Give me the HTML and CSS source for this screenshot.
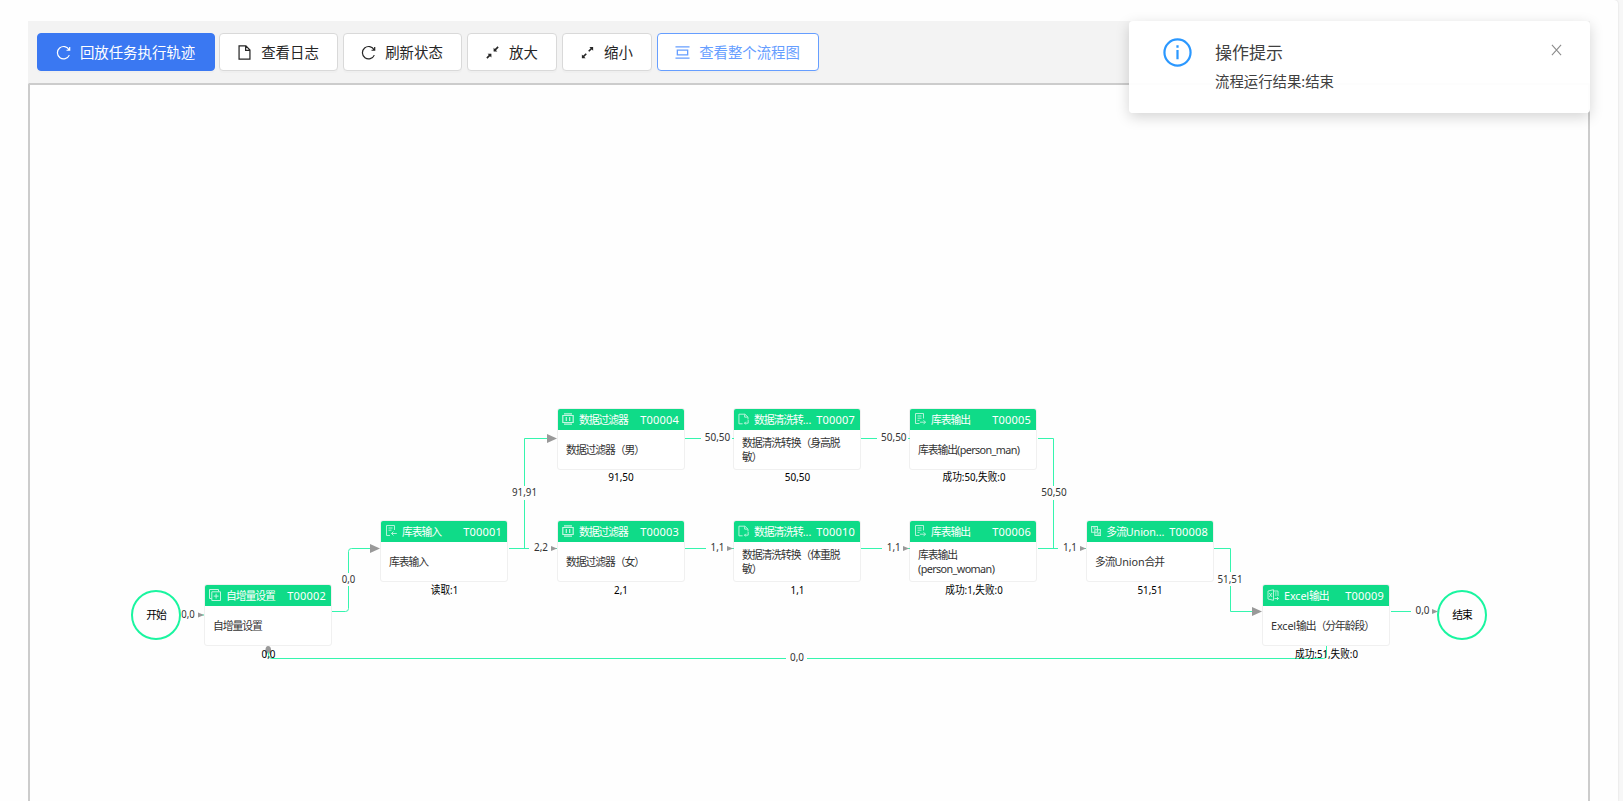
FILE: index.html
```html
<!DOCTYPE html>
<html lang="zh-CN">
<head>
    <meta charset="utf-8">
    <title>流程监控</title>
    <link rel="stylesheet" href="styles.css">
</head>
<body>
    <svg class="sprite">
        <symbol id="reload" viewBox="0 0 16 16"><path d="M14 5.2A6.6 6.6 0 1 0 14.2 10.800M14.600 2.200V5.600H11.200" fill="none" stroke="currentColor" stroke-width="1.300"/></symbol>
        <symbol id="file" viewBox="0 0 16 16"><path d="M2.200 1H9.500L13.800 5.300V15H2.200ZM9.200 1V5.700H13.800" fill="none" stroke="currentColor" stroke-width="1.300"/></symbol>
        <symbol id="shrink" viewBox="0 0 16 16"><path d="M2 14L6 10M14 2L10 6" stroke="currentColor" stroke-width="1.700"/><path d="M2.800 9.200H6.800V13.200ZM9.200 2.800V6.800H13.200Z" fill="currentColor"/></symbol>
        <symbol id="arrows" viewBox="0 0 16 16"><path d="M3 13L6.700 9.300M13 3L9.300 6.700" stroke="currentColor" stroke-width="1.700"/><path d="M2 10V14H6ZM10 2H14V6Z" fill="currentColor"/></symbol>
        <symbol id="flow" viewBox="0 0 16 16"><path d="M.5 2H15.500M.5 14H15.500M2.500 5.500H13.500V10.500H2.500Z" fill="none" stroke="currentColor" stroke-width="1.400"/></symbol>
        <symbol id="add" viewBox="0 0 12 12"><path d="M2.500 9.500H.5V.5H9.500V2.500M2.800 2.800H11.500V11.500H2.800ZM7.100 4.700V9.600M4.700 7.100H9.600" fill="none" stroke="currentColor"/></symbol>
        <symbol id="input" viewBox="0 0 12 12"><path d="M9.500 5V.5H1.500V10.500H5M3.500 3H7.500M3.500 5.200H6.500M11.800 8.500H6.500M8.500 6.500L6.500 8.500L8.500 10.500" fill="none" stroke="currentColor" stroke-width=".9"/></symbol>
        <symbol id="output" viewBox="0 0 12 12"><path d="M9.500 5.500V.5H1.500V10.500H5.500M3.500 3H7.500M3.500 5.200H7.500M3.500 7.400H5.500M6 9.200H11.500M9.500 7.200L11.500 9.200L9.500 11.200" fill="none" stroke="currentColor" stroke-width=".9"/></symbol>
        <symbol id="filter" viewBox="0 0 12 12"><path d="M2 .8H10M2 11.200H10M.8 2.500H11.200V9.500H.8ZM4.300 4V8M7.700 4V8" fill="none" stroke="currentColor" stroke-width="1.200"/></symbol>
        <symbol id="clean" viewBox="0 0 12 12"><path d="M5 11.200H1V.8H7.500L10.800 4V6.500M7.200 1V4H10.500M11 7V10.500H7M8.500 9L7 10.500L8.500 12" fill="none" stroke="currentColor"/></symbol>
        <symbol id="union" viewBox="0 0 12 12"><path d="M.7.7H7.500V7.500H.7ZM4.500 4.500H11.300V11.300H4.500ZM2.500 2.500H5.500M9.500 7V9.500H6.500" fill="none" stroke="currentColor" stroke-width="1.200"/></symbol>
        <symbol id="excel" viewBox="0 0 12 12"><path d="M1 2L6.500.7V11.300L1 10ZM6.500 2H11V7M2.300 4L5 8M5 4L2.300 8M8 4H9.500M8 6H9.500M7.500 9.500H11.500M10 8L11.500 9.500L10 11" fill="none" stroke="currentColor" stroke-width=".9"/></symbol>
    </svg>

    <div class="page">
        <div class="toolbar">
            <button class="btn primary"><svg><use href="#reload"/></svg>回放任务执行轨迹</button>
            <button class="btn"><svg><use href="#file"/></svg>查看日志</button>
            <button class="btn"><svg><use href="#reload"/></svg>刷新状态</button>
            <button class="btn"><svg><use href="#shrink"/></svg>放大</button>
            <button class="btn"><svg><use href="#arrows"/></svg>缩小</button>
            <button class="btn ghost"><svg><use href="#flow"/></svg>查看整个流程图</button>
        </div>

        <div class="canvas">
            <div class="circle start">开始</div>
            <div class="circle end">结束</div>

            <div class="node n2"><div class="head"><svg><use href="#add"/></svg><span class="name">自增量设置</span><span class="id">T00002</span></div><div class="body">自增量设置</div></div>
            <div class="node n1"><div class="head"><svg><use href="#input"/></svg><span class="name">库表输入</span><span class="id">T00001</span></div><div class="body">库表输入</div></div>
            <div class="node n4"><div class="head"><svg><use href="#filter"/></svg><span class="name">数据过滤器</span><span class="id">T00004</span></div><div class="body">数据过滤器（男）</div></div>
            <div class="node n3"><div class="head"><svg><use href="#filter"/></svg><span class="name">数据过滤器</span><span class="id">T00003</span></div><div class="body">数据过滤器（女）</div></div>
            <div class="node n7"><div class="head"><svg><use href="#clean"/></svg><span class="name">数据清洗转<span class="latin">...</span></span><span class="id">T00007</span></div><div class="body">数据清洗转换（身高脱<br>敏）</div></div>
            <div class="node n10"><div class="head"><svg><use href="#clean"/></svg><span class="name">数据清洗转<span class="latin">...</span></span><span class="id">T00010</span></div><div class="body">数据清洗转换（体重脱<br>敏）</div></div>
            <div class="node n5"><div class="head"><svg><use href="#output"/></svg><span class="name">库表输出</span><span class="id">T00005</span></div><div class="body"><span>库表输出<span class="latin tight">(person_man)</span></span></div></div>
            <div class="node n6"><div class="head"><svg><use href="#output"/></svg><span class="name">库表输出</span><span class="id">T00006</span></div><div class="body"><span>库表输出<br><span class="latin tight">(person_woman)</span></span></div></div>
            <div class="node n8"><div class="head"><svg><use href="#union"/></svg><span class="name">多流<span class="latin">Union...</span></span><span class="id">T00008</span></div><div class="body"><span>多流<span class="latin">Union</span>合并</span></div></div>
            <div class="node n9"><div class="head"><svg><use href="#excel"/></svg><span class="name"><span class="latin">Excel</span>输出</span><span class="id">T00009</span></div><div class="body"><span><span class="latin">Excel</span>输出（分年龄段）</span></div></div>

            <svg class="edges" viewBox="30 85 1558 716">
                <g class="lines">
                    <path d="M198 615H204M332 611.500H345.500Q348.500 611.500 348.500 608.500V586M348.500 573V551.500Q348.500 548.500 351.500 548.500H372"/>
                    <path d="M509 548.500H529M524.500 548.500V500M524.500 486V438.500H548"/>
                    <path d="M553 548.500H557M685 438.500H701M685 548.500H706M732 438.500H734M729 548.500H734"/>
                    <path d="M861 438.500H877M861 548.500H882M908 438.500H910M905 548.500H910"/>
                    <path d="M1038 438.500H1053.500V486M1053.500 500V548.500M1038 548.500H1058M1081 548.500H1086"/>
                    <path d="M1214 548.500H1230.500V572M1230.500 586V611.500H1254M1391 611.500H1411"/>
                    <path d="M1326.500 646V655.500Q1326.500 658.500 1323.500 658.500H807M786 658.500H272Q268.500 658.500 268.500 655V651"/>
                </g>
                <g class="arrows">
                    <path d="M370 544L380 548.500L370 553Z"/>
                    <path d="M547 434L557 438.500L547 443Z"/>
                    <path d="M1252 607L1262 611.500L1252 616Z"/>
                    <path d="M265.500 656V649Q266 646 268 646Q270.500 646 271 649V656L268.500 652Z"/>
                    <path d="M198 612.500L204 615L198 617.500Z"/>
                    <path d="M551 546L557 548.500L551 551Z"/>
                    <path d="M727 546L733 548.500L727 551Z"/>
                    <path d="M903 546L909 548.500L903 551Z"/>
                    <path d="M1080 546L1086 548.500L1080 551Z"/>
                    <path d="M1432 609L1438 611.500L1432 614Z"/>
                </g>
                <g class="labels">
                    <text x="188" y="618" textLength="13.500" lengthAdjust="spacingAndGlyphs">0,0</text>
                    <text x="348.500" y="583" textLength="13.500" lengthAdjust="spacingAndGlyphs">0,0</text>
                    <text x="524.500" y="496" textLength="25" lengthAdjust="spacingAndGlyphs">91,91</text>
                    <text x="541" y="551" textLength="14" lengthAdjust="spacingAndGlyphs">2,2</text>
                    <text x="717.500" y="441" textLength="25.500" lengthAdjust="spacingAndGlyphs">50,50</text>
                    <text x="717.500" y="551" textLength="14" lengthAdjust="spacingAndGlyphs">1,1</text>
                    <text x="893.800" y="441" textLength="25.500" lengthAdjust="spacingAndGlyphs">50,50</text>
                    <text x="893.800" y="551" textLength="14" lengthAdjust="spacingAndGlyphs">1,1</text>
                    <text x="1054" y="496" textLength="25.500" lengthAdjust="spacingAndGlyphs">50,50</text>
                    <text x="1070" y="551" textLength="14" lengthAdjust="spacingAndGlyphs">1,1</text>
                    <text x="1230" y="583" textLength="25" lengthAdjust="spacingAndGlyphs">51,51</text>
                    <text x="1422.500" y="614" textLength="14" lengthAdjust="spacingAndGlyphs">0,0</text>
                    <text x="797" y="661" textLength="14" lengthAdjust="spacingAndGlyphs">0,0</text>
                </g>
                <g class="results">
                    <text x="268.500" y="658" textLength="14" lengthAdjust="spacingAndGlyphs">0,0</text>
                    <text x="444.500" y="594" textLength="27.500" lengthAdjust="spacingAndGlyphs">读取:1</text>
                    <text x="621" y="481" textLength="25.500" lengthAdjust="spacingAndGlyphs">91,50</text>
                    <text x="621" y="594" textLength="14" lengthAdjust="spacingAndGlyphs">2,1</text>
                    <text x="797.500" y="481" textLength="25.500" lengthAdjust="spacingAndGlyphs">50,50</text>
                    <text x="797.500" y="594" textLength="14" lengthAdjust="spacingAndGlyphs">1,1</text>
                    <text x="974" y="481" textLength="63" lengthAdjust="spacingAndGlyphs">成功:50,失败:0</text>
                    <text x="974" y="594" textLength="57.500" lengthAdjust="spacingAndGlyphs">成功:1,失败:0</text>
                    <text x="1150" y="594" textLength="25" lengthAdjust="spacingAndGlyphs">51,51</text>
                    <text x="1326.500" y="658" textLength="63" lengthAdjust="spacingAndGlyphs">成功:51,失败:0</text>
                </g>
            </svg>
        </div>
    </div>

    <div class="notice">
        <svg class="info" viewBox="0 0 30 30"><circle cx="15" cy="15" r="13.500"/><path d="M15 12.500V22M15 7.500V10"/></svg>
        <div class="message">
            <div class="title">操作提示</div>
            <div class="desc">流程运行结果:结束</div>
        </div>
        <svg class="close" viewBox="0 0 12 12"><path d="M1 .5L11 11.500M11 .5L1 11.500"/></svg>
    </div>
</body>
</html>
```
FILE: styles.css
```css
* {
    box-sizing: border-box;
}

body {
    margin: 0;
    height: 801px;
    overflow: hidden;
    background: #f7f7f7;
    font-family: "Noto Sans", "Noto Sans CJK SC", sans-serif;
    font-size: 14.4px;
}

.sprite {
    display: none;
}

.page {
    width: 1618px;
    height: 801px;
    padding: 21px 28px 0;
    background: #fefefe;
    border-radius: 0 4px 0 0;
    box-shadow: 0 0 2px rgba(0, 0, 0, 0.15);
    display: flex;
    flex-direction: column;
}

.toolbar {
    height: 62px;
    padding: 12px 9px;
    display: flex;
    gap: 5px;
    background: #f3f3f3;
}

/* buttons */
.btn {
    width: 119px;
    height: 38px;
    padding: 0 1px 2px 0;
    display: flex;
    align-items: center;
    justify-content: center;
    gap: 9px;
    border: 1px solid #d9d9d9;
    border-radius: 4px;
    background: #fff;
    color: #262626;
    font: inherit;
    white-space: nowrap;
    box-shadow: 0 2px 0 rgba(0, 0, 0, 0.015);
}

.btn svg {
    width: 15px;
    height: 15px;
    margin-top: 2px;
}

.btn:nth-child(n+4) {
    width: 90px;
}

.btn.primary {
    width: 178px;
    margin-right: -1px;
    border-color: #3a78f2;
    background: #3a78f2;
    color: #fff;
}

.btn.ghost {
    width: 162px;
    border-color: #669eff;
    color: #669eff;
}

/* flow canvas */
.canvas {
    position: relative;
    width: 1562px;
    height: 760px;
    border: 2px solid #ccc;
    border-bottom: 0;
    border-radius: 2px 2px 0 0;
    background: #fefefe;
    font-size: 10.8px;
}

.edges {
    position: absolute;
    left: 0;
    top: 0;
    width: 1558px;
    height: 716px;
}

.lines path {
    fill: none;
    stroke: #35f5ae;
    stroke-width: 1;
}

.arrows path {
    fill: #999;
}

.labels text,
.results text {
    text-anchor: middle;
    font-size: 11px;
    fill: #333;
}

.results text {
    fill: #000;
}

.circle {
    position: absolute;
    top: 505px;
    width: 50px;
    height: 50px;
    border: 2px solid #1af5a0;
    border-radius: 50%;
    line-height: 46px;
    text-align: center;
    letter-spacing: -1px;
    color: #000;
}

.start {
    left: 101px;
}

.end {
    left: 1407px;
}

.node {
    position: absolute;
    width: 128px;
    height: 62px;
    border: 1px solid #f0f0f0;
    border-radius: 3px;
    background: #fff;
    color: #333;
    letter-spacing: -1.05px;
}

.head {
    height: 21px;
    padding: 0 5px 1px 4px;
    display: flex;
    align-items: center;
    gap: 5px;
    border-radius: 2px 2px 0 0;
    background: #0fdb88;
    color: #fff;
    white-space: nowrap;
}

.head svg {
    width: 12px;
    height: 12px;
    opacity: 0.75;
}

.id {
    margin-left: auto;
    font-size: 11px;
    letter-spacing: 0.2px;
}

.latin {
    letter-spacing: -0.1px;
}

.latin.tight {
    letter-spacing: -0.6px;
}

.body {
    height: 39px;
    padding: 1px 0 0 8px;
    display: flex;
    align-items: center;
    line-height: 14.5px;
    white-space: nowrap;
}

.n2 { left: 174px; top: 499px; }
.n1 { left: 350px; top: 435px; }
.n4 { left: 527px; top: 323px; }
.n3 { left: 527px; top: 435px; }
.n7 { left: 703px; top: 323px; }
.n10 { left: 703px; top: 435px; }
.n5 { left: 879px; top: 323px; }
.n6 { left: 879px; top: 435px; }
.n8 { left: 1056px; top: 435px; }
.n9 { left: 1232px; top: 499px; }

/* notification */
.notice {
    position: absolute;
    left: 1129px;
    top: 21px;
    width: 461px;
    height: 92px;
    padding: 17px 28px 0 34px;
    display: flex;
    border-radius: 4px;
    background: rgba(255, 255, 255, 0.95);
    box-shadow: 0 4px 14px rgba(0, 0, 0, 0.17);
    color: #404040;
}

.info {
    width: 29px;
    height: 29px;
    fill: none;
    stroke: #2b98ff;
    stroke-width: 2.3;
}

.message {
    flex: 1;
    margin-left: 23px;
}

.title {
    font-size: 17px;
    line-height: 30px;
}

.desc {
    line-height: 28px;
}

.close {
    width: 11px;
    height: 12px;
    margin-top: 6px;
    fill: none;
    stroke: #8c8c8c;
    stroke-width: 1.2;
}
```
